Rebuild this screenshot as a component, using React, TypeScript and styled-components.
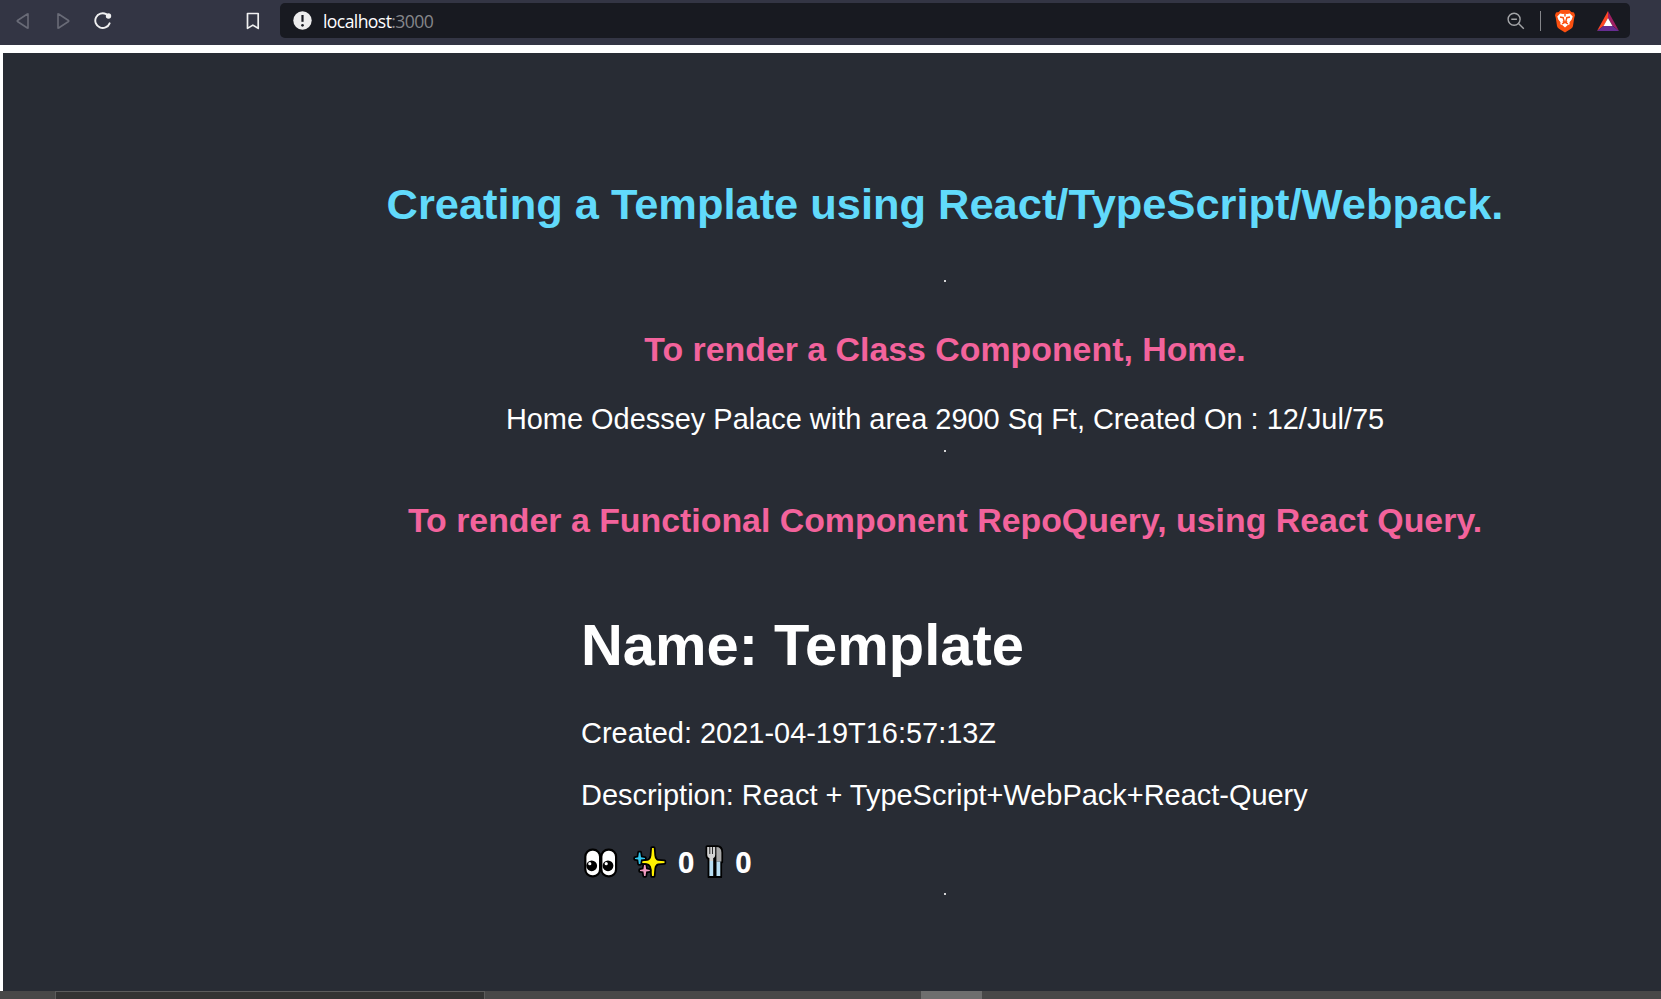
import React from "react";
import styled, { createGlobalStyle } from "styled-components";

const GlobalStyle = createGlobalStyle`
  *, *::before, *::after { box-sizing: border-box; }
  html, body { margin: 0; padding: 0; overflow: hidden; background: #ffffff; }
`;

const Screen = styled.div`
  display: flex;
  flex-direction: column;
  width: 1661px;
  height: 999px;
  overflow: hidden;
  background: #ffffff;
  font-family: "Liberation Sans", Arial, sans-serif;
`;

const Toolbar = styled.header`
  display: flex;
  flex: none;
  align-items: flex-start;
  height: 45px;
  padding-top: 3px;
  background: #333544;
`;

const NavGroup = styled.nav`
  display: flex;
  align-items: center;
  height: 35px;
  width: 280px;
  padding-left: 16px;
`;

const NavIcon = styled.svg<{ $gap?: number }>`
  flex: none;
  display: block;
  margin-left: ${(p) => p.$gap ?? 0}px;
`;

const AddressBar = styled.div`
  display: flex;
  align-items: center;
  width: 1350px;
  height: 35px;
  padding: 0 11px 0 13px;
  border-radius: 5px;
  background: #181a21;
`;

const Address = styled.span`
  flex: 1;
  margin-left: 11px;
  font: 400 17.6px/24px "Open Sans", "Noto Sans", sans-serif;
  letter-spacing: -0.6px;
  color: #ffffff;
`;

const Port = styled.span`
  color: #85868a;
`;

const Divider = styled.span`
  width: 1px;
  height: 20px;
  margin: 0 13px 0 15px;
  background: #85868a;
`;

const Page = styled.main`
  flex: 1;
  display: flex;
  flex-direction: column;
  align-items: center;
  width: 1884px;
  margin: 8px 0 0 3px;
  padding-top: 125px;
  background: #282c34;
  color: #ffffff;
  white-space: nowrap;
`;

const Title = styled.h2`
  margin: 0;
  font-size: 43.42px;
  line-height: 52px;
  color: #61dafb;
`;

const Subtitle = styled.h3`
  margin: 0;
  font-size: 33.86px;
  line-height: 40px;
  color: #f3639c;
`;

const Text = styled.p<{ $top: number }>`
  margin: ${(p) => p.$top}px 0 0;
  font-size: 28.95px;
  line-height: 34px;
`;

const Rule = styled.hr<{ $before: number; $after: number }>`
  width: 2px;
  height: 2px;
  margin: ${(p) => p.$before}px 0 ${(p) => p.$after}px;
  border: 0;
  background: #d4d5d6;
`;

const Repo = styled.section`
  width: 728px;
  margin-top: 71px;
`;

const RepoName = styled.h1`
  margin: 0 0 37px;
  font-size: 57.9px;
  line-height: 68px;
`;

const Stats = styled.div`
  display: flex;
  align-items: center;
  height: 40px;
  margin-top: 30px;
`;

const Count = styled.strong<{ $before: number }>`
  margin-left: ${(p) => p.$before}px;
  font: 700 28.5px/40px "Open Sans", "Noto Sans", sans-serif;
`;

const Glyph = styled.svg<{ $before: number }>`
  flex: none;
  margin-left: ${(p) => p.$before}px;
`;

const Taskbar = styled.footer`
  display: flex;
  flex: none;
  height: 8px;
  padding-left: 55px;
  background: #484848;
`;

const SearchField = styled.div`
  width: 430px;
  border: 1px solid #5c5c5c;
  border-bottom: 0;
  background: #333333;
`;

const ActiveTask = styled.div`
  width: 61px;
  margin-left: 436px;
  background: #6e6e6e;
`;

const Back = () => (
  <NavIcon width="14" height="18" viewBox="0 0 14 18" fill="none" stroke="#696b77" strokeWidth="1.6" strokeLinejoin="round">
    <path d="M12 2.1V15.9Q12 16.5 11.4 16L1.5 9.5Q1 9 1.5 8.5L11.4 2Q12 1.5 12 2.1Z" />
  </NavIcon>
);

const Forward = () => (
  <NavIcon $gap={26} width="14" height="18" viewBox="0 0 14 18" fill="none" stroke="#696b77" strokeWidth="1.6" strokeLinejoin="round">
    <path d="M2 2.1V15.9Q2 16.5 2.6 16L12.5 9.5Q13 9 12.5 8.5L2.6 2Q2 1.5 2 2.1Z" />
  </NavIcon>
);

const Reload = () => (
  <NavIcon $gap={24} width="18" height="18" viewBox="0 0 18 18" fill="none" stroke="#f0f0f1" strokeWidth="1.9" strokeLinecap="round">
    <path d="M12.2 2.1A7.4 7.4 0 1 0 15.6 11.3" />
    <circle cx="14.5" cy="4" r="2.7" fill="#f0f0f1" stroke="none" />
  </NavIcon>
);

const Bookmark = () => (
  <NavIcon $gap={134} width="14" height="18" viewBox="0 0 14 18" fill="none" stroke="#f0f0f1" strokeWidth="1.7" strokeLinejoin="round">
    <path d="M1.5 1.5H12.2V16.4L6.85 13.1L1.5 16.4Z" />
  </NavIcon>
);

const SiteInfo = () => (
  <NavIcon width="19" height="19" viewBox="0 0 19 19">
    <circle cx="9.5" cy="9.5" r="9.2" fill="#ececed" />
    <path d="M9.5 4V10.8" stroke="#181a21" strokeWidth="2.2" />
    <circle cx="9.5" cy="14.3" r="1.35" fill="#181a21" />
  </NavIcon>
);

const ZoomOut = () => (
  <NavIcon width="18" height="18" viewBox="0 0 18 18" fill="none" stroke="#a4a5a8" strokeWidth="1.4">
    <circle cx="7.1" cy="7.2" r="6" />
    <path d="M4.3 7.2H9.9M11.5 11.5L16.8 16.8" />
  </NavIcon>
);

const BraveLion = () => (
  <NavIcon width="22" height="24" viewBox="0 0 22 24">
    <path d="M6.6 1H15.4L17.3 3.1L20 3.4L21 6.2L20.2 9L19 17Q18.7 18.5 17 19.8L11 23.6L5 19.8Q3.3 18.5 3 17L1.8 9L1 6.2L2 3.4L4.7 3.1Z" fill="#fb5010" />
    <path d="M6.1 4.4L9 5.1L11 4.7L13 5.1L15.9 4.4L18.7 7.4L17.7 10.4L15.5 13.3L15.7 15.3L13.8 16L11 18.6L8.2 16L6.3 15.3L6.5 13.3L4.3 10.4L3.3 7.4Z" fill="#fff" />
    <path d="M6 8L9.2 8.7L9.6 10.6L10.2 12.2L8.8 13.2M16 8L12.8 8.7L12.4 10.6L11.8 12.2L13.2 13.2M8 14.8L11 13.4L14 14.8M11 4.6V7.4" fill="none" stroke="#fb5010" strokeWidth="1.4" />
  </NavIcon>
);

const RewardsTriangle = () => (
  <NavIcon $gap={21} width="22" height="20" viewBox="0 0 22 20">
    <path d="M11 0L0 20L7 14.5L11 7Z" fill="#ff4724" />
    <path d="M11 0L22 20L15.5 14.8L11 7Z" fill="#9e1f63" />
    <path d="M0 20L6.6 14.8H15.4L22 20Z" fill="#662d91" />
    <path d="M11 7L15.5 15H6.5Z" fill="#fff" />
  </NavIcon>
);

const Eyes = () => (
  <Glyph $before={3} width="34" height="34" viewBox="0 -3.4 34 34">
    <rect x="1.3" y="1.3" width="14.8" height="26.6" rx="7" fill="#fff" stroke="#000" strokeWidth="2.2" />
    <rect x="17.3" y="1.3" width="14.8" height="26.6" rx="7" fill="#fff" stroke="#000" strokeWidth="2.2" />
    <circle cx="7.7" cy="17.4" r="5.4" />
    <circle cx="24" cy="17.4" r="5.4" />
    <circle cx="5.8" cy="15.3" r="1.6" fill="#fff" />
    <circle cx="22.2" cy="15.3" r="1.6" fill="#fff" />
  </Glyph>
);

const Star = styled.path`
  stroke: #000000;
  stroke-width: 3.4px;
  stroke-linejoin: round;
  paint-order: stroke;
`;

const Sparkles = () => (
  <Glyph $before={15} width="34" height="34" viewBox="0 0 34 34">
    <Star d="M19 3H20.8L21.4 10.5Q22 15 25 15.8L31.5 16.3V18L25 18.6Q22 19.4 21.4 23.5L20.8 31H19L18.4 23.5Q17.8 19.4 14.5 18.6L9 18V16.3L14.5 15.8Q17.8 15 18.4 10.5Z" fill="#fff100" />
    <Star d="M5.9 7.5H7.3L8 12.2L12 12.9V14L8 14.6L7.3 19H5.9L5.2 14.6L2 14V12.9L5.2 12.2Z" fill="#31c6ed" />
    <Star d="M11.1 20H12.5L13.2 24.2L16.8 24.9V26L13.2 26.6L12.5 31H11.1L10.4 26.6L7 26V24.9L10.4 24.2Z" fill="#f29bc1" />
  </Glyph>
);

const Cutlery = () => (
  <Glyph $before={11} width="19" height="34" viewBox="0 0 19 34">
    <path d="M2.2 1H12.5Q17.4 1 17.4 7V17.5H16.4V32.3H3.3V14.5Q1.2 13 1.2 10.5V2Q1.2 1 2.2 1Z" fill="#000" stroke="#000" strokeWidth="1.4" strokeLinejoin="round" />
    <path d="M11.4 2Q16.4 2 16.4 7.5V16.5H11.4Z" fill="#a8a8a8" />
    <path d="M2.2 2H10.2V10Q10.2 12.6 8.2 13.2V16H4.4V13.2Q2.2 12.6 2.2 10Z" fill="#d2d2d2" />
    <path d="M4.8 2V9M7.5 2V9" stroke="#151515" strokeWidth=".9" />
    <path d="M4.4 16H8.2V31H4.4ZM11.5 16.5H15.3V31H11.5Z" fill="#b8def3" />
  </Glyph>
);

export default function App() {
  return (
    <Screen>
      <GlobalStyle />
      <Toolbar>
        <NavGroup>
          <Back />
          <Forward />
          <Reload />
          <Bookmark />
        </NavGroup>
        <AddressBar>
          <SiteInfo />
          <Address>
            localhost<Port>:3000</Port>
          </Address>
          <ZoomOut />
          <Divider />
          <BraveLion />
          <RewardsTriangle />
        </AddressBar>
      </Toolbar>
      <Page>
        <Title>Creating a Template using React/TypeScript/Webpack.</Title>
        <Rule $before={50} $after={47} />
        <Subtitle>To render a Class Component, Home.</Subtitle>
        <Text $top={33}>Home Odessey Palace with area 2900 Sq Ft, Created On : 12/Jul/75</Text>
        <Rule $before={14} $after={48} />
        <Subtitle>To render a Functional Component RepoQuery, using React Query.</Subtitle>
        <Repo>
          <RepoName>Name: Template</RepoName>
          <Text $top={0}>Created: 2021-04-19T16:57:13Z</Text>
          <Text $top={28}>Description: React + TypeScript+WebPack+React-Query</Text>
          <Stats>
            <Eyes />
            <Sparkles />
            <Count $before={11}>0</Count>
            <Cutlery />
            <Count $before={11}>0</Count>
          </Stats>
        </Repo>
        <Rule $before={11} $after={0} />
      </Page>
      <Taskbar>
        <SearchField />
        <ActiveTask />
      </Taskbar>
    </Screen>
  );
}
